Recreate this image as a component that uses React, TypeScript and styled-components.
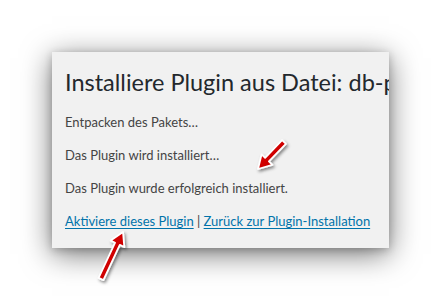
import React from "react";
import styled, { createGlobalStyle } from "styled-components";

const Global = createGlobalStyle`
  html, body { margin: 0; padding: 0; background: #ffffff; }
  body { width: 441px; height: 301px; overflow: hidden; }
`;

const Stage = styled.div`
  position: relative;
  width: 441px;
  height: 301px;
  padding: 52px 0 0 52px;
  box-sizing: border-box;
  font-family: "Segoe UI", Lato, "Noto Sans", sans-serif;
`;

const Panel = styled.div`
  width: 337px;
  height: 196px;
  box-sizing: border-box;
  background: #f1f1f1;
  overflow: hidden;
  padding: 15px 0 0 13px;
  box-shadow: 0 6px 28px rgba(0, 0, 0, 0.55), 0 2px 8px rgba(0, 0, 0, 0.2);
`;

const Title = styled.h1`
  margin: 0 0 14px;
  font-size: 23.5px;
  font-weight: 400;
  line-height: 31px;
  color: #23282d;
  white-space: nowrap;
`;

const Line = styled.p`
  margin: 0 0 13px;
  font-size: 13px;
  line-height: 20px;
  color: #444444;
  white-space: nowrap;
`;

const Link = styled.a`
  color: #0073aa;
  text-decoration: underline;
  text-underline-offset: 2px;
`;

const Sep = styled.span`
  color: #444444;
`;

const Overlay = styled.svg`
  position: absolute;
  left: 0;
  top: 0;
  pointer-events: none;
`;

function arrowPoints(tx: number, ty: number, hx: number, hy: number) {
  const dx = hx - tx;
  const dy = hy - ty;
  const len = Math.hypot(dx, dy);
  const ux = dx / len;
  const uy = dy / len;
  const px = -uy;
  const py = ux;
  const headLen = 13;
  const headW = 7.5;
  const shaftW = 2.6;
  const bx = hx - ux * headLen;
  const by = hy - uy * headLen;
  const pts = [
    [tx + px * shaftW, ty + py * shaftW],
    [bx + px * shaftW, by + py * shaftW],
    [bx + px * headW, by + py * headW],
    [hx, hy],
    [bx - px * headW, by - py * headW],
    [bx - px * shaftW, by - py * shaftW],
    [tx - px * shaftW, ty - py * shaftW],
  ];
  return pts.map((p) => p.map((v) => v.toFixed(1)).join(",")).join(" ");
}

const Arrow: React.FC<{ t: [number, number]; h: [number, number] }> = ({ t, h }) => (
  <polygon
    points={arrowPoints(t[0], t[1], h[0], h[1])}
    fill="url(#red)"
    stroke="#ffffff"
    strokeWidth={1.8}
    strokeLinejoin="round"
    filter="url(#sh)"
  />
);

export default function App() {
  return (
    <>
      <Global />
      <Stage>
        <Panel>
          <Title>Installiere Plugin aus Datei: db-prefix-change.zip</Title>
          <Line>Entpacken des Pakets…</Line>
          <Line>Das Plugin wird installiert…</Line>
          <Line>Das Plugin wurde erfolgreich installiert.</Line>
          <Line>
            <Link href="#">Aktiviere dieses Plugin</Link>
            <Sep> | </Sep>
            <Link href="#">Zurück zur Plugin-Installation</Link>
          </Line>
        </Panel>
        <Overlay width="441" height="301" viewBox="0 0 441 301">
          <defs>
            <linearGradient id="red" x1="0" y1="0" x2="1" y2="1">
              <stop offset="0" stopColor="#e00000" />
              <stop offset="1" stopColor="#c00000" />
            </linearGradient>
            <filter id="sh" x="-50%" y="-50%" width="200%" height="200%">
              <feDropShadow dx="1.5" dy="2" stdDeviation="1.5" floodColor="#000" floodOpacity="0.45" />
            </filter>
          </defs>
          <Arrow t={[284, 142]} h={[258, 169]} />
          <Arrow t={[101, 279]} h={[123, 232]} />
        </Overlay>
      </Stage>
    </>
  );
}
